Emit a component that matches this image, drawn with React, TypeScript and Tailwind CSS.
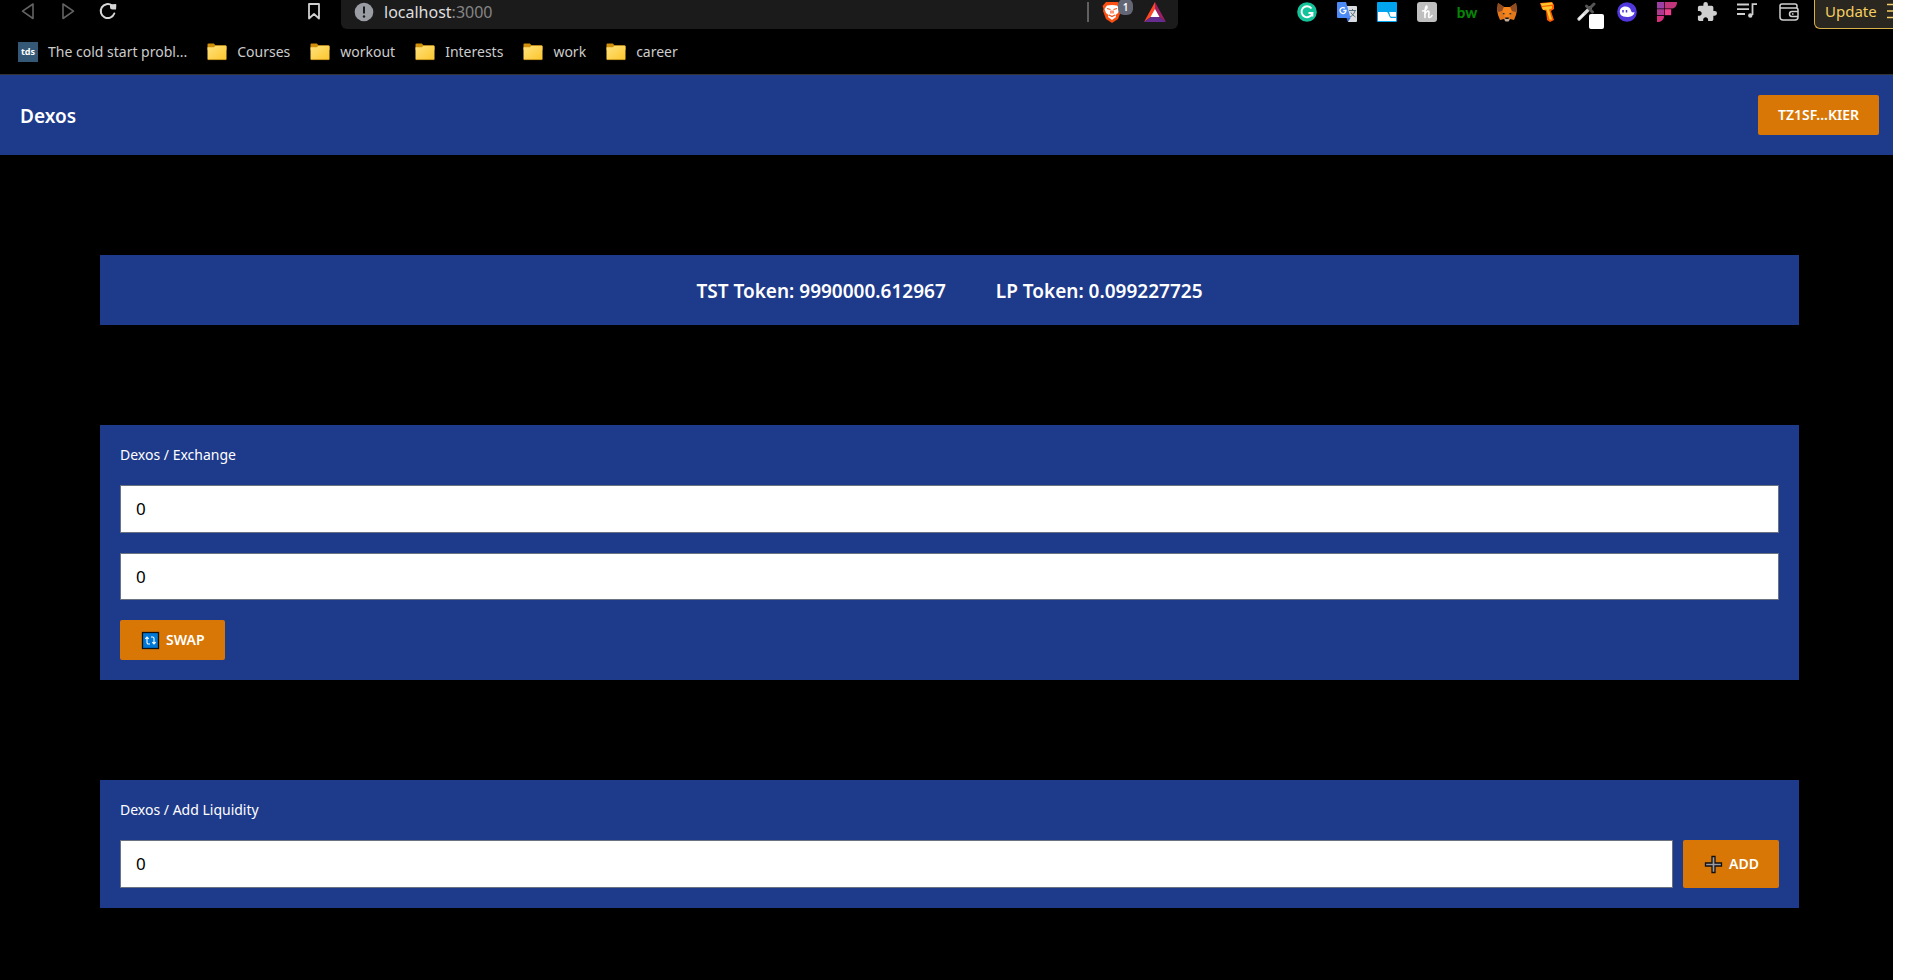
import { useState } from "react";
import type { ReactNode } from "react";

const extIcon = "h-5 w-5 shrink-0";

function Folder() {
  return (
    <svg viewBox="0 0 20 20" className="h-5 w-5" aria-hidden="true">
      <defs>
        <linearGradient id="fold" x1="0" y1="0" x2="1" y2="1">
          <stop offset="0" stopColor="#ffe27c" />
          <stop offset="1" stopColor="#fcc52c" />
        </linearGradient>
      </defs>
      <path d="M.5 2.500a1 1 0 0 1 1-1h5.300l1.700 1.700H18.500a1 1 0 0 1 1 1V8H.5z" fill="#d1900a" />
      <path d="M.5 5.300h6.300L8.500 3.700h10a1 1 0 0 1 1 1V17a1 1 0 0 1-1 1h-17a1 1 0 0 1-1-1z" fill="url(#fold)" />
      <path d="M1 17.600h18" stroke="#b98617" strokeWidth=".8" />
    </svg>
  );
}

function IconButton({ label, children }: { label: string; children: ReactNode }) {
  return (
    <button type="button" aria-label={label} title={label} className="relative flex h-5 w-5 shrink-0 items-center justify-center">
      {children}
    </button>
  );
}

function BrowserBar() {
  const folders = ["Courses", "workout", "Interests", "work", "career"];
  return (
    <div className="h-[75px] overflow-hidden border-b border-[#333] bg-black font-['Noto_Sans',sans-serif] text-[#ccc]">
      <div className="flex h-[29px] items-start">
        <div className="flex w-[341px] shrink-0 items-center pt-px pl-[18px]">
          <div className="flex flex-1 gap-5">
            <IconButton label="Back">
              <svg viewBox="0 0 20 20" className={extIcon}><path d="M15 3v14.500L4.500 10.200z" fill="none" stroke="#636363" strokeWidth="1.600" strokeLinejoin="round" /></svg>
            </IconButton>
            <IconButton label="Forward">
              <svg viewBox="0 0 20 20" className={extIcon}><path d="M5 3v14.500l10.500-7.300z" fill="none" stroke="#636363" strokeWidth="1.600" strokeLinejoin="round" /></svg>
            </IconButton>
            <IconButton label="Reload">
              <svg viewBox="0 0 20 20" className={extIcon}>
                <path d="M16.300 12.500A7 7 0 1 1 14 4.500" fill="none" stroke="#d6d6d6" strokeWidth="2" strokeLinecap="round" />
                <path d="M12 3.500 17.500 3a.8.800 0 0 1 .8.800L18 8.500h-3.500A2.500 2.500 0 0 1 12 6z" fill="#d6d6d6" />
              </svg>
            </IconButton>
          </div>
          <div className="pr-[17px]">
            <IconButton label="Bookmark this page">
              <svg viewBox="0 0 20 20" className={extIcon}><path d="M5 3h10v14.500l-5-4.500-5 4.500z" fill="none" stroke="#d0d0d0" strokeWidth="1.800" strokeLinejoin="round" /></svg>
            </IconButton>
          </div>
        </div>
        <div className="flex h-[29px] min-w-0 flex-1 items-start rounded-b-md bg-[#1b1b1b] pr-3 pl-[13px]">
          <svg viewBox="0 0 20 20" className="mt-[2px] h-5 w-5 shrink-0" aria-hidden="true">
            <circle cx="10" cy="10" r="9.300" fill="#9a9da3" />
            <path d="M10 4.500v7" stroke="#1b1b1b" strokeWidth="2" />
            <circle cx="10" cy="14.500" r="1.200" fill="#1b1b1b" />
          </svg>
          <p className="ml-[10px] flex-1 text-[16px] leading-6 text-[#dedede]">
            localhost<span className="text-[#858585]">:3000</span>
          </p>
          <div className="mt-[2px] h-5 w-[2px] bg-[#606060]" />
          <div className="relative ml-[13px] flex h-6 w-5 items-center">
            <svg viewBox="0 0 20 22" className="h-[22px] w-5" aria-label="Brave Shields">
              <path d="M4 1h12l3.500 4-1 3 .5 2L16 18l-6 4-6-4L1 10l.5-2-1-3z" fill="#fb4f14" />
              <path d="M5 4.500 10 4l5 .5 2.500 3.500-1.500 4-2.500 2 .5 2-4 3-4-3 .5-2L4 12 2.500 8z" fill="#fff" />
              <path d="M5 7.500l3.500 1M15 7.500l-3.500 1M9 9.500v3M11 9.500v3M7 14l3 1.500 3-1.500" stroke="#fb4f14" strokeWidth="1.200" fill="none" />
            </svg>
            <span className="absolute -top-px left-4 h-4 w-[15px] rounded-md bg-[#636674] text-center text-[10px] leading-4 font-semibold text-white">1</span>
          </div>
          <svg viewBox="0 0 22 20" className="mt-[2px] ml-[22px] h-5 w-[22px]" aria-label="Brave Rewards">
            <path d="M11 0 0 20l11-8z" fill="#ff4724" />
            <path d="M11 0l11 20-11-8z" fill="#9e1f63" />
            <path d="M0 20h22l-11-8z" fill="#662d91" />
            <path d="M11 7l4.500 8h-9z" fill="#fff" />
          </svg>
        </div>
        <div className="flex shrink-0 items-start gap-5 pt-[2px] pl-[119px]">
          <IconButton label="Grammarly">
            <svg viewBox="0 0 20 20" className={extIcon}>
              <circle cx="10" cy="10" r="9.800" fill="#15c39a" />
              <path d="M14.500 6.500A5.500 5.500 0 1 0 15.400 11H11.500M15.400 11v3.500" stroke="#fff" strokeWidth="1.900" fill="none" />
            </svg>
          </IconButton>
          <IconButton label="Google Translate">
            <svg viewBox="0 0 20 20" className={extIcon}>
              <path d="M9 4h10a1 1 0 0 1 1 1v14a1 1 0 0 1-1 1h-8z" fill="#dadce0" />
              <path d="M12 8.500h7M15.500 7v2M18 9c-1 3-3 5-5 6M14 10.500c1 2 3 3.500 4.500 4.500" stroke="#57707d" fill="none" />
              <path d="M1 0h8l4.500 16H1a1 1 0 0 1-1-1V1a1 1 0 0 1 1-1z" fill="#4c8bf5" />
              <path d="M9.500 16h4L11 20z" fill="#3367d6" />
              <path d="M8 6.300A3 3 0 1 0 9 8.500H6.300" stroke="#fff" strokeWidth="1.300" fill="none" />
            </svg>
          </IconButton>
          <IconButton label="Page ruler">
            <svg viewBox="0 0 20 20" className={extIcon}>
              <rect width="20" height="20" rx="1" fill="#00a4ef" />
              <path d="M1 10h8.500c2.500 0 2 6 5 6H19v3H1z" fill="#fff" />
              <path d="M12 10h7v4.700h-4.500c-2 0-1.500-3.500-2.500-4.700z" fill="#fff" />
            </svg>
          </IconButton>
          <IconButton label="Honey">
            <svg viewBox="0 0 20 20" className={extIcon}>
              <rect width="20" height="20" rx="3" fill="#bfbfbf" />
              <path d="M5.500 9C8 9 10.300 6.500 10 4.800S7.500 4 8 15.500M8 12c1-3 4-4 4-1.500 0 2-1 5 .5 5s2-1 2.500-2" stroke="#fff" strokeWidth="1.600" fill="none" strokeLinecap="round" />
            </svg>
          </IconButton>
          <IconButton label="BuiltWith">
            <span className="font-['Lato',sans-serif] text-[15px] leading-5 font-black text-[#078407]">bw</span>
          </IconButton>
          <IconButton label="MetaMask">
            <svg viewBox="0 0 20 20" className={extIcon}>
              <path d="M1 1l6 4h6l6-4 1 7-1 5-2 5-4-1-2 2H9l-2-2-4 1-2-5-1-5z" fill="#e2761b" />
              <path d="M1 1l6 4-2 4-4 1-1-2zM19 1l-6 4 2 4 4 1 1-2z" fill="#8f4b22" />
              <path d="M7 5h6l2 6-3 4H8l-3-4z" fill="#f6851b" />
              <path d="M5.500 10.500l3 1.500-2.500.5zM14.500 10.500l-3 1.500 2.500.5z" fill="#233447" />
              <path d="M8 16h4l.5 2-1 1.500h-3l-1-1.500z" fill="#c0ad9e" />
              <path d="M8.300 15.500h3.400v1.500H8.300z" fill="#161616" />
            </svg>
          </IconButton>
          <IconButton label="Temple wallet">
            <svg viewBox="0 0 20 20" className={extIcon}>
              <path d="M3 1l12-1 2 3v4l-3 2 3 9-4 2-3-2-1-9-4-2z" fill="#ff5b00" />
              <path d="M3.500 1.500 15 .5l1 2-11 1.500zM5 5l10-1v2.500l-3 1 3 10h-2.500L9.500 7.500 6 8z" fill="#ffc72b" />
            </svg>
          </IconButton>
          <IconButton label="Color picker">
            <svg viewBox="0 0 20 20" className={extIcon}>
              <path d="M2 17 13 6" stroke="#d8d8d8" strokeWidth="3.200" strokeLinecap="round" />
              <path d="M2 17 7 12" stroke="#fff" strokeWidth="1.200" />
              <path d="M9.500 4l6 6M13 6l4-4" stroke="#555" strokeWidth="3" strokeLinecap="round" />
            </svg>
            <span className="absolute top-3 left-3 h-[15px] w-[15px] rounded-xs bg-white" />
          </IconButton>
          <IconButton label="Phantom">
            <svg viewBox="0 0 20 20" className={extIcon}>
              <circle cx="10" cy="10" r="9.800" fill="#5138dc" />
              <path d="M2.800 9.500C3 3 13 3 14 8.500c.3 2 2 2.500 3.500 1.500-.5 5.500-8 5.500-11 4.500-2.500-.5-3.700-2.500-3.700-5z" fill="#fff" />
              <path d="M6 8v2.400M9.500 8v2.400" stroke="#4a3bd0" strokeWidth="1.500" />
            </svg>
          </IconButton>
          <IconButton label="Fractal">
            <svg viewBox="0 0 20 20" className={extIcon}>
              <path d="M0 0h7v6.500H0z" fill="#9b3fa5" />
              <path d="M7.700 0H20c0 4-2 6.500-5.500 6.500H7.700z" fill="#c2357d" />
              <path d="M0 7.200h7v6H0z" fill="#b03a90" />
              <path d="M7.700 7.200h6.500v6H7.700z" fill="#ef3f8d" />
              <path d="M0 14h7c0 4-3 6-7 6z" fill="#d6307c" />
            </svg>
          </IconButton>
          <IconButton label="Extensions">
            <svg viewBox="1 1 22 22" className={extIcon} fill="#cfcfcf">
              <path d="M20.500 11H19V7c0-1.100-.9-2-2-2h-4V3.500a2.500 2.500 0 0 0-5 0V5H4c-1.100 0-1.990.9-1.990 2v3.800H3.500c1.490 0 2.700 1.210 2.700 2.700s-1.210 2.700-2.700 2.700H2V20c0 1.100.9 2 2 2h3.800v-1.500c0-1.490 1.210-2.700 2.700-2.700s2.700 1.210 2.700 2.700V22H17c1.100 0 2-.9 2-2v-4h1.500a2.500 2.500 0 0 0 0-5z" />
            </svg>
          </IconButton>
          <IconButton label="Playlist">
            <svg viewBox="0 0 20 20" className={extIcon} fill="none" stroke="#cfcfcf" strokeWidth="1.800">
              <path d="M0 2.500h12M0 7.200h12M0 12h8M20 2.200h-4.500V13" />
              <circle cx="13.300" cy="13.500" r="2.200" fill="#cfcfcf" stroke="none" />
            </svg>
          </IconButton>
        </div>
        <div className="flex shrink-0 items-start gap-[15px] pl-[22px]">
          <div className="pt-[2px]">
            <IconButton label="Wallet">
              <svg viewBox="0 0 20 20" className={extIcon} fill="none" stroke="#cfcfcf" strokeWidth="1.500">
                <path d="M18 6V4a2 2 0 0 0-2-2H3a2 2 0 0 0-2 2v11a3 3 0 0 0 3 3h12a3 3 0 0 0 3-3V8a2 2 0 0 0-2-2H1.500" />
                <path d="M19 9.500h-6a2.500 2.500 0 0 0 0 5h6M13 12h1.500" />
              </svg>
            </IconButton>
          </div>
          <button type="button" className="flex h-[29px] w-[79px] shrink-0 items-start overflow-hidden rounded-bl-md border-b border-l border-[#d8b04a] bg-[#2a2620] pl-[10px] text-[15px] leading-[22px] text-[#f5cf62]">
            <span className="w-[62px] shrink-0 text-left">Update</span>
            <svg viewBox="0 0 20 20" className="h-5 w-5 shrink-0" aria-hidden="true">
              <path d="M0 4.500h20M0 11h20M0 17.500h20" stroke="#f5cf62" strokeWidth="1.600" />
            </svg>
          </button>
        </div>
      </div>
      <nav className="flex h-[46px] items-center gap-5 pl-[18px] text-[14px] leading-5">
        <a href="#start" className="flex items-center gap-[10px]">
          <span className="flex h-5 w-5 items-center justify-center bg-[#355876] text-[9px] font-bold text-white">tds</span>
          The cold start probl...
        </a>
        {folders.map((name) => (
          <a key={name} href={`#${name}`} className="flex items-center gap-[10px]">
            <Folder />
            {name}
          </a>
        ))}
      </nav>
    </div>
  );
}

const actionButton =
  "flex shrink-0 items-center justify-center gap-[6px] rounded-xs bg-[#d97706] px-5 text-[14px] leading-5 font-semibold uppercase text-white";
const amountField = "w-full min-w-0 border border-[#6b7280] bg-white px-[15px] text-[17px] text-black outline-none";

function AmountInput({ label }: { label: string }) {
  const [value, setValue] = useState("0");
  return (
    <input aria-label={label} className={amountField} inputMode="decimal" value={value} onChange={(e) => setValue(e.target.value)} />
  );
}

export default function App() {
  return (
    <div className="flex min-h-screen bg-white">
      <div className="min-w-0 flex-1 bg-black">
        <BrowserBar />
        <div className="font-['Noto_Sans',sans-serif] text-white">
          <header className="flex h-20 items-center justify-between bg-[#1e3a8a] pr-[14px] pl-5">
            <h1 className="pt-[2px] text-[19px] font-semibold">Dexos</h1>
            <button type="button" className={`${actionButton} h-10`}>tz1Sf...KiER</button>
          </header>
          <main className="flex flex-col gap-[100px] pt-[100px] pr-[94px] pb-[72px] pl-[100px]">
            <section className="flex h-[70px] items-center justify-center gap-[50px] bg-[#1e3a8a] pt-[2px] text-[19px] font-semibold">
              <p>TST Token: 9990000.612967</p>
              <p>LP Token: 0.099227725</p>
            </section>
            <section className="flex flex-col gap-5 bg-[#1e3a8a] p-5">
              <h2 className="text-[14px] leading-5">Dexos / Exchange</h2>
              <div className="grid h-[115px] grid-rows-2 gap-5">
                <AmountInput label="Amount to send" />
                <AmountInput label="Amount to receive" />
              </div>
              <button type="button" className={`${actionButton} h-10 self-start`}>
                <svg viewBox="0 0 20 20" className="h-5 w-5" aria-hidden="true">
                  <rect x="2.500" y="2.500" width="16" height="16" fill="#0078d7" stroke="#111" strokeWidth="1.300" />
                  <path d="M10 14H8.500A1.500 1.500 0 0 1 7 12.500V7.500M5.300 8.800 7 7l1.700 1.800M11 7h1.500A1.500 1.500 0 0 1 14 8.500v5M12.300 12.200 14 14l1.700-1.800" fill="none" stroke="#fff" strokeWidth="1.100" />
                </svg>
                Swap
              </button>
            </section>
            <section className="flex flex-col gap-5 bg-[#1e3a8a] p-5">
              <h2 className="text-[14px] leading-5">Dexos / Add Liquidity</h2>
              <div className="flex h-12 gap-[10px]">
                <AmountInput label="Liquidity amount" />
                <button type="button" className={actionButton}>
                  <svg viewBox="0 0 20 20" className="h-5 w-5" aria-hidden="true">
                    <path d="M9 2.500h3V9h6.500v3H12v6.500H9V12H2.500V9H9z" fill="#9a9aa2" stroke="#111" strokeWidth="1.300" />
                  </svg>
                  Add
                </button>
              </div>
            </section>
          </main>
        </div>
      </div>
      <div className="w-[35px] shrink-0 bg-white" />
    </div>
  );
}
